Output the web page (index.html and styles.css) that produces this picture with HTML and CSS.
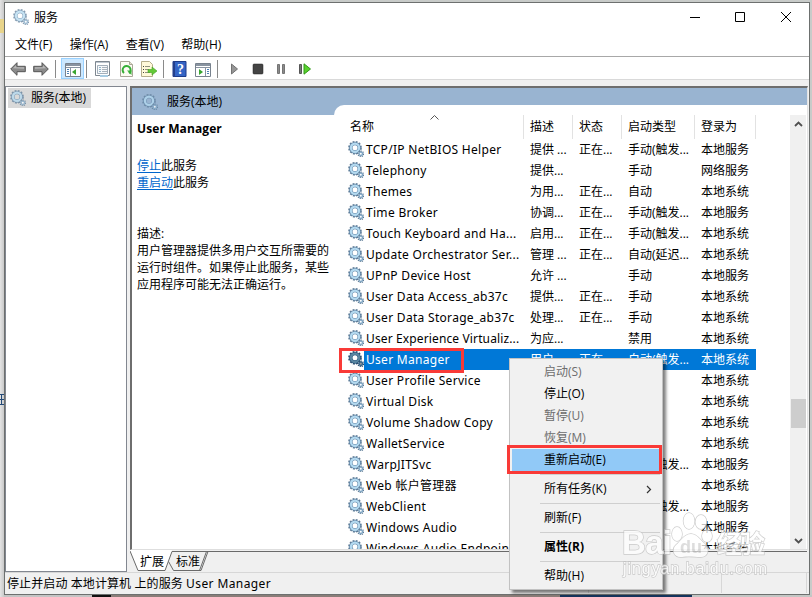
FILE: index.html
```html
<!DOCTYPE html>
<html lang="zh-CN">
<head>
<meta charset="utf-8">
<title>服务</title>
<link rel="stylesheet" href="styles.css">
</head>
<body>
<svg class="defs" width="0" height="0" aria-hidden="true">
  <defs>
    <g id="gears">
      <circle cx="7" cy="6.8" r="6" fill="none" stroke="#5f7c96" stroke-width="1.7" stroke-dasharray="1.9 1.24"/>
      <circle cx="7" cy="6.8" r="4.200" fill="none" stroke="#5f83a5" stroke-width="3.400"/>
      <circle cx="7" cy="6.800" r="4.100" fill="none" stroke="#b4daf0" stroke-width="2.200"/>
      <circle cx="12.800" cy="12.800" r="2.700" fill="none" stroke="#5f7c96" stroke-width="1.400" stroke-dasharray="1.2 .84"/>
      <circle cx="12.800" cy="12.800" r="1.700" fill="#fff" stroke="#7fa6c4" stroke-width="1.400"/>
    </g>
    <symbol id="gear" viewBox="0 0 16 16"><use href="#gears"/></symbol>
  </defs>
</svg>
<div class="window">
  <header class="titlebar">
    <svg class="gear faded"><use href="#gear"/></svg>
    <span class="title">服务</span>
    <svg class="controls" width="103" height="12" viewBox="0 0 103 12" fill="none" stroke="#000">
      <path d="M0 6.500h10M45.500 1.500h9v9h-9zM91 1l10 10M101 1L91 11"/>
    </svg>
  </header>
  <nav class="menubar"><span>文件(F)</span><span>操作(A)</span><span>查看(V)</span><span>帮助(H)</span></nav>
  <div class="toolbar">
    <svg width="16" height="16"><path d="M.7 8L7 1.700v3.600h8.300v5.400H7v3.600z" fill="#8b8b8b" stroke="#555"/><path d="M3 7.300L6 4.300v2h8v1.500z" fill="#b8b8b8"/></svg>
    <svg width="16" height="16"><path d="M15.300 8L9 1.700v3.600H.7v5.400H9v3.600z" fill="#8b8b8b" stroke="#555"/><path d="M13 7.300L10 4.300v2H2v1.500z" fill="#b8b8b8"/></svg>
    <i></i>
    <b class="pressed"><svg width="16" height="16"><path d="M.5 2.500h15v13H.5z" fill="#fff" stroke="#78828e"/><path d="M1 3h14v2H1z" fill="#8994a1"/><path d="M1 6.500h14M5.500 7v8" stroke="#8994a1"/><path d="M2 8.500h2M2 10.500h2M2 12.500h2" stroke="#4b80b5"/><path d="M11 8v6l-4-3z" fill="#39a52f"/></svg></b>
    <i class="tight"></i>
    <svg width="16" height="16"><path d="M.5.500h14v14H.5z" fill="#fff" stroke="#7e8790"/><path d="M1 1.500h13" stroke="#bdc6cf"/><path d="M2.500 4.500h10v8h-10z" fill="#f6f8fa" stroke="#a3afba"/><path d="M4 6.500h2M4 8.500h2M4 10.500h2" stroke="#8fb3c9"/><path d="M7 6.500h5M7 8.500h5M7 10.500h5" stroke="#a9b3bc"/><path d="M5 14h8v2H5z" fill="#a7cbe2"/></svg>
    <svg width="16" height="16"><path d="M2.500.500h9l3 3v12h-12z" fill="#fdfcf3" stroke="#aaa698"/><path d="M11.500.500v3h3" fill="#e4e0ce" stroke="#aaa698"/><path d="M6 12a4 4 0 1 1 5 .2" fill="none" stroke="#36af36" stroke-width="2"/><path d="M9 9.500h4.500V14z" fill="#36af36"/></svg>
    <svg width="16" height="16"><path d="M.5.500h8l3 3v12H.5z" fill="#fff9d9" stroke="#b5ad8b"/><path d="M2 5.500h1M2 8.500h1M2 11.500h1" stroke="#444"/><path d="M4 5.500h5M4 8.500h4M4 11.500h5" stroke="#91917e"/><path d="M7 8.500h4V6l5 4-5 4v-2.500H7z" fill="#65c938" stroke="#41a323" stroke-width=".6"/></svg>
    <i></i>
    <svg width="16" height="16"><path d="M1 .500h13v15H1z" fill="#3565c5" stroke="#1c3b8b"/><path d="M1 0h2v16H1z" fill="#243f8b"/><text class="question" x="5" y="13">?</text></svg>
    <svg width="16" height="16"><path d="M.5 2.500h15v13H.5z" fill="#fff" stroke="#78828e"/><path d="M1 3h14v2H1z" fill="#8994a1"/><path d="M1 6.500h14M10.500 7v8" stroke="#8994a1"/><path d="M12 8.500h2M12 10.500h2M12 12.500h2" stroke="#4b80b5"/><path d="M4 8v6l4-3z" fill="#39a52f"/></svg>
    <i></i>
    <svg class="play" width="16" height="16"><path d="M3.500 3v10l6-5z" fill="#969696" stroke="#737373"/></svg>
    <svg width="16" height="16"><rect x="2" y="3" width="10" height="10" rx="1" fill="#444" stroke="#222" stroke-width=".5"/></svg>
    <svg width="16" height="16"><path d="M3.500 3.500h2v9h-2zM8.500 3.500h2v9h-2z" fill="#8b8b8b" stroke="#747474"/></svg>
    <svg width="16" height="16"><path d="M2.500 3.500h2v9h-2z" fill="#777" stroke="#555"/><path d="M7 2.800v10.400L13.500 8z" fill="#58d12d" stroke="#32981a"/></svg>
  </div>
  <main class="workspace">
    <aside class="tree"><div class="tree-item"><svg class="gear faded"><use href="#gear"/></svg><span>服务(本地)</span></div></aside>
    <section class="result">
      <div class="pane">
        <div class="pane-head"><svg class="gear faded"><use href="#gear"/></svg><span>服务(本地)</span></div>
        <div class="details">
          <h1>User Manager</h1>
          <p class="links"><a>停止</a>此服务<br><a>重启动</a>此服务</p>
          <p class="desc">描述:<br>用户管理器提供多用户交互所需要的<br>运行时组件。如果停止此服务，某些<br>应用程序可能无法正确运行。</p>
        </div>
        <div class="list">
          <div class="table">
            <div class="row head"><span>名称<svg class="sort" width="9" height="5"><path d="M.5 4.500l4-4 4 4" fill="none" stroke="#555"/></svg></span><span>描述</span><span>状态</span><span>启动类型</span><span>登录为</span></div>
            <div class="row"><svg class="gear"><use href="#gear"/></svg><span class="n">TCP/IP NetBIOS Helper</span><span>提供 ...</span><span>正在...</span><span>手动(触发...</span><span>本地服务</span></div>
            <div class="row"><svg class="gear"><use href="#gear"/></svg><span class="n">Telephony</span><span>提供...</span><span></span><span>手动</span><span>网络服务</span></div>
            <div class="row"><svg class="gear"><use href="#gear"/></svg><span class="n">Themes</span><span>为用...</span><span>正在...</span><span>自动</span><span>本地系统</span></div>
            <div class="row"><svg class="gear"><use href="#gear"/></svg><span class="n">Time Broker</span><span>协调...</span><span>正在...</span><span>手动(触发...</span><span>本地服务</span></div>
            <div class="row"><svg class="gear"><use href="#gear"/></svg><span class="n">Touch Keyboard and Ha...</span><span>启用...</span><span>正在...</span><span>手动(触发...</span><span>本地系统</span></div>
            <div class="row"><svg class="gear"><use href="#gear"/></svg><span class="n">Update Orchestrator Ser...</span><span>管理 ...</span><span>正在...</span><span>自动(延迟...</span><span>本地系统</span></div>
            <div class="row"><svg class="gear"><use href="#gear"/></svg><span class="n">UPnP Device Host</span><span>允许 ...</span><span></span><span>手动</span><span>本地服务</span></div>
            <div class="row"><svg class="gear"><use href="#gear"/></svg><span class="n">User Data Access_ab37c</span><span>提供...</span><span>正在...</span><span>手动</span><span>本地系统</span></div>
            <div class="row"><svg class="gear"><use href="#gear"/></svg><span class="n">User Data Storage_ab37c</span><span>处理...</span><span>正在...</span><span>手动</span><span>本地系统</span></div>
            <div class="row"><svg class="gear"><use href="#gear"/></svg><span class="n snug">User Experience Virtualiz...</span><span>为应...</span><span></span><span>禁用</span><span>本地系统</span></div>
            <div class="row selected"><svg class="gear"><use href="#gear"/></svg><span class="n">User Manager</span><span>用户...</span><span>正在...</span><span>自动(触发...</span><span>本地系统</span></div>
            <div class="row"><svg class="gear"><use href="#gear"/></svg><span class="n">User Profile Service</span><span></span><span></span><span></span><span>本地系统</span></div>
            <div class="row"><svg class="gear"><use href="#gear"/></svg><span class="n">Virtual Disk</span><span></span><span></span><span></span><span>本地系统</span></div>
            <div class="row"><svg class="gear"><use href="#gear"/></svg><span class="n">Volume Shadow Copy</span><span></span><span></span><span></span><span>本地系统</span></div>
            <div class="row"><svg class="gear"><use href="#gear"/></svg><span class="n">WalletService</span><span></span><span></span><span></span><span>本地系统</span></div>
            <div class="row"><svg class="gear"><use href="#gear"/></svg><span class="n">WarpJITSvc</span><span></span><span></span><span>手动(触发...</span><span>本地服务</span></div>
            <div class="row"><svg class="gear"><use href="#gear"/></svg><span class="n">Web 帐户管理器</span><span></span><span></span><span></span><span>本地系统</span></div>
            <div class="row"><svg class="gear"><use href="#gear"/></svg><span class="n">WebClient</span><span></span><span></span><span>手动(触发...</span><span>本地服务</span></div>
            <div class="row"><svg class="gear"><use href="#gear"/></svg><span class="n">Windows Audio</span><span></span><span></span><span></span><span>本地服务</span></div>
            <div class="row"><svg class="gear"><use href="#gear"/></svg><span class="n">Windows Audio Endpoint...</span><span></span><span></span><span></span><span>本地系统</span></div>
          </div>
          <div class="scrollbar">
            <svg width="9" height="6"><path d="M1 5l3.500-3.500L8 5" fill="none" stroke="#505050" stroke-width="1.800"/></svg>
            <div class="thumb"></div>
            <svg width="9" height="6"><path d="M1 1l3.500 3.500L8 1" fill="none" stroke="#505050" stroke-width="1.800"/></svg>
          </div>
        </div>
      </div>
      <div class="tabs">
        <svg class="tab-lines" width="677" height="22" viewBox="0 0 677 22" fill="none" stroke="#6a6a6a">
          <path d="M0 0h42l-7 20.500H8z" fill="#fff" stroke="none"/>
          <path d="M0 1l8 19.500h27L42 1.500h635M38.500 11.500l5 9H71L78 1.500M69.500 20.500L76.500 1.500"/>
        </svg>
        <span>扩展</span><span>标准</span>
      </div>
    </section>
  </main>
  <footer class="statusbar"><span class="message">停止并启动 本地计算机 上的服务 <em>User Manager</em></span><span></span><span></span></footer>
</div>
<div class="context-menu">
  <div class="item off">启动(S)</div>
  <div class="item">停止(O)</div>
  <div class="item off">暂停(U)</div>
  <div class="item off">恢复(M)</div>
  <div class="item hover">重新启动(E)</div>
  <hr>
  <div class="item">所有任务(K)<svg width="6" height="9"><path d="M1 1l3.500 3.500L1 8" fill="none" stroke="#333" stroke-width="1.200"/></svg></div>
  <hr>
  <div class="item">刷新(F)</div>
  <hr>
  <div class="item strong">属性(R)</div>
  <hr>
  <div class="item">帮助(H)</div>
</div>
<div class="mark mark-row"></div>
<div class="mark mark-item"></div>
<svg class="watermark" width="152" height="74" viewBox="0 0 152 74">
  <g class="wm">
    <text x="2" y="44" font-size="33" textLength="50">Bai</text>
    <ellipse cx="57" cy="24" rx="5" ry="7"/><ellipse cx="69" cy="11" rx="5.500" ry="8"/><ellipse cx="81" cy="12" rx="5.500" ry="7"/><ellipse cx="87" cy="26" rx="5" ry="6"/>
    <path d="M71 24c6 0 9 6 14 10 5 5 3 13-4 13-6 0-13-1-19 0-8 1-11-7-6-12 5-4 8-11 15-11z"/>
    <text x="97" y="43" font-size="25" textLength="48">经验</text>
    <text x="3" y="64" font-size="16" textLength="144" class="url">jingyan.baidu.com</text>
  </g>
  <text x="60" y="43" class="du">du</text>
</svg>
<svg class="backdrop" width="4" height="16"><path d="M0 2.500h4M1.500 3v9M0 7.500h4M0 12.500h4" stroke="#234a78"/></svg>
</body>
</html>
```
FILE: styles.css
```css
* { box-sizing: border-box; }
body {
  margin: 0;
  width: 812px;
  height: 597px;
  overflow: hidden;
  padding: 2px 2px 2px 4px;
  position: relative;
  font: 12px/16px "Open Sans", "Noto Sans CJK SC", sans-serif;
  color: #000;
  background:
    linear-gradient(#e8d48b, #e8d48b) 0 19px / 4px 14px no-repeat,
    linear-gradient(90deg, #e4e4e4, #c9c9c9) 0 0 / 4px 597px no-repeat,
    linear-gradient(90deg, #c4c4c4 0 92px, #111 92px 111px, #8a7d78 111px 560px, #15345c 560px 692px, #c4c6c4 692px) 0 595px / 812px 2px no-repeat,
    #c8cbc9;
}
.defs { position: absolute; }
svg { display: block; flex: none; }
.window {
  width: 806px;
  height: 593px;
  border: 1px solid #6d706f;
  background: #fff;
  display: flex;
  flex-direction: column;
}
.gear { width: 16px; height: 16px; }
.faded { opacity: .75; }
.titlebar { height: 29px; display: flex; align-items: center; padding: 0 16px 1px 8px; }
.title { margin-left: 5px; padding-top: 2px; }
.controls { margin-left: auto; }
.menubar { height: 24px; display: flex; gap: 17.4px; padding: 5px 10px; }
.toolbar {
  height: 24px;
  border-top: 1px solid #a8a8a8;
  border-bottom: 1px solid #d9d9d9;
  display: flex;
  align-items: center;
  gap: 7px;
  padding: 1px 0 0 5px;
}
.toolbar i { width: 1px; height: 18px; background: #8a8a8a; margin: 0 1px 0 -1px; }
.toolbar .tight { margin-left: -5px; }
.pressed { height: 21px; width: 23px; margin-left: -3px; background: #cce8ff; border: 1px solid #99d1ff; padding: 2px 3px; }
.play { margin-left: 2px; }
.question { font: bold 14px "Liberation Serif", serif; fill: #fff; }
.workspace { height: 492px; background: #f0f0f0; display: flex; gap: 3px; padding-top: 6px; }
.tree { width: 122px; height: 486px; border: 1px solid #828790; background: #fff; padding: 1px 2px; }
.tree-item { width: 83px; height: 20px; display: flex; align-items: center; gap: 5px; padding-left: 2px; background: #d9d9d9; }
.result { width: 678px; display: flex; flex-direction: column; }
.pane {
  height: 464px;
  border-left: 2px solid #6e6e6e;
  border-top: 2px solid #6e6e6e;
  border-right: 1px solid #e3e3e3;
  border-bottom: 1px solid #dedede;
  background: #fff;
  display: grid;
  grid-template: 17px 10px 1fr / 202px 1fr;
}
.pane-head {
  grid-area: 1 / 1 / 3 / 3;
  background: #99b4d1;
  display: flex;
  align-items: center;
  gap: 9px;
  padding-left: 10px;
}
.details { grid-area: 3 / 1; padding: 6px 0 0 5px; line-height: 17px; }
h1 { margin: 0; font: bold 12px/16px "Open Sans", sans-serif; letter-spacing: .1px; }
p { margin: 0; white-space: nowrap; }
.links { margin-top: 20px; }
.links a { color: #0066cc; text-decoration: underline; text-underline-offset: 2px; }
.desc { margin-top: 34px; }
.list {
  grid-area: 2 / 2 / 4 / 3;
  background: #fff;
  border-top-left-radius: 10px;
  padding: 10px 0 0 13px;
  display: flex;
  overflow: hidden;
}
.table { width: 443px; height: 434px; overflow: hidden; }
.row {
  height: 21px;
  display: grid;
  grid-template-columns: 17px 159px 49px 49px 73px 61px;
  align-items: center;
  width: 409px;
  white-space: nowrap;
}
.row .gear { margin: -2px 0 0 1px; }
.row span { padding-left: 7px; line-height: 21px; }
.row .n { padding-left: 2px; font-family: "Noto Sans", "Noto Sans CJK SC", sans-serif; letter-spacing: .3px; }
.row .snug { letter-spacing: .13px; }
.head { height: 24px; grid-template-columns: 176px 49px 49px 73px 62px; }
.head span { border-right: 1px solid #e2e2e2; line-height: 24px; padding-left: 7px; position: relative; width: calc(100% + 1px); }
.head span:first-child { padding-left: 3px; }
.head span:last-child { width: 100%; }
.sort { position: absolute; left: 83px; top: 0; }
.selected { color: #fff; background: linear-gradient(90deg, #fff 17px, #0078d7 17px); }
.selected .gear { filter: brightness(.6) saturate(2); }
.scrollbar { width: 16px; height: 434px; background: #f0f0f0; display: flex; flex-direction: column; align-items: center; padding: 6px 0 5px; }
.thumb { width: 15px; height: 29px; background: #cdcdcd; margin: 272px 0 auto; }
.tabs { height: 22px; display: flex; position: relative; padding: 4px 0 0 10px; gap: 12px; }
.tabs span { position: relative; }
.tab-lines { position: absolute; left: 0; top: 0; }
.statusbar { height: 22px; background: #f0f0f0; border-top: 1px solid #d7d7d7; display: flex; padding-bottom: 1px; }
.statusbar span { border-right: 1px solid #d7d7d7; width: 133px; padding-left: 2px; line-height: 22px; }
.statusbar .message { width: 584px; font-family: "Noto Sans", "Noto Sans CJK SC", sans-serif; letter-spacing: .1px; }
.statusbar em { font-style: normal; letter-spacing: .4px; }
.statusbar span:last-child { width: 85px; }
.context-menu {
  position: absolute;
  left: 509px;
  top: 358px;
  width: 154px;
  height: 232px;
  padding: 2px;
  border: 1px solid #c2c2c2;
  background: #f1f1f1;
  box-shadow: 3px 3px 3px rgba(0, 0, 0, .5);
}
.item { height: 22px; line-height: 22px; padding: 0 8px 0 32px; display: flex; align-items: center; justify-content: space-between; }
.off { color: #6d6d6d; }
.hover { background: #91c9f7; }
.strong { font-weight: bold; }
hr { border: 0; height: 1px; margin: 3px 0 3px 28px; background: #cfcfcf; }
.mark { position: absolute; border: 3px solid #f93a37; }
.mark-row { left: 339px; top: 348px; width: 125px; height: 25px; }
.mark-item { left: 507px; top: 445px; width: 155px; height: 29px; }
.watermark { position: absolute; left: 620px; top: 510px; opacity: .75; }
.wm { fill: #fff; stroke: #bdbdbd; stroke-width: 1.4px; paint-order: stroke; font-family: "Liberation Sans", "Noto Sans CJK SC", sans-serif; font-weight: bold; }
.url { font-weight: normal; }
.du { font: bold 18px "Liberation Sans", sans-serif; fill: #d2d2d2; }
.backdrop { position: absolute; left: 0; top: 392px; }
```
